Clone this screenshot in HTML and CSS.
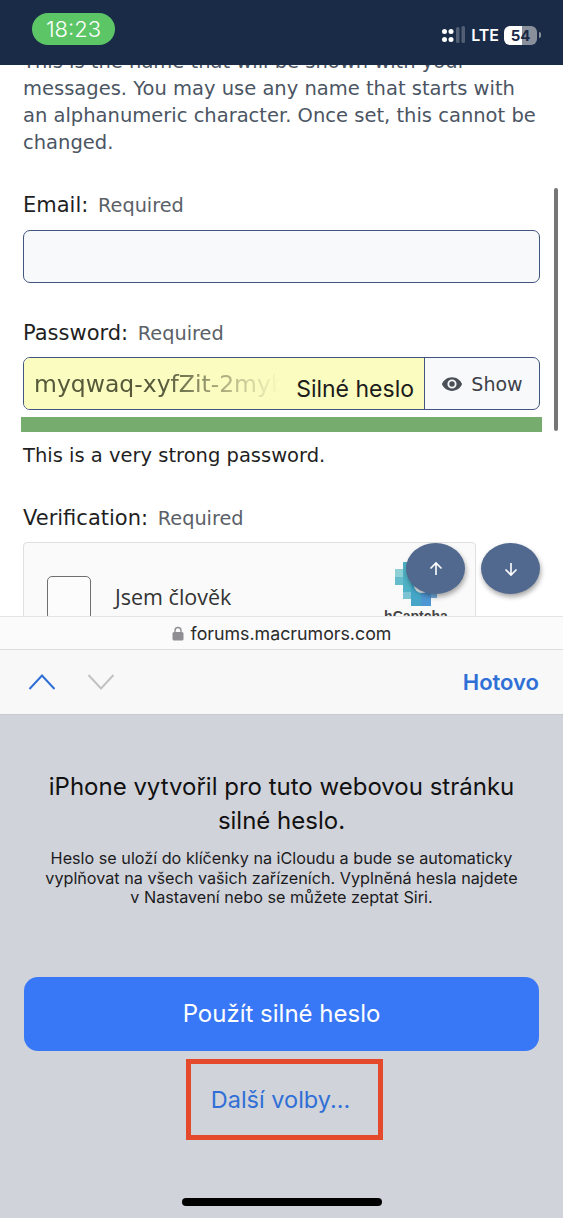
FILE: index.html
```html
<!DOCTYPE html>
<html lang="cs">
<head>
    <meta charset="UTF-8">
    <meta name="viewport" content="width=device-width, initial-scale=1.0">
    <title>Silné heslo</title>
    <link rel="stylesheet" href="styles.css">
</head>
<body>
    <div class="status-bar">
        <div class="time-pill">18:23</div>
        <div class="status-right">
            <svg class="signal" width="24" height="18" viewBox="0 0 24 18">
                <rect x="0" y="3" width="5" height="5" rx="2.5" fill="#fff"/>
                <rect x="0" y="11" width="5" height="5" rx="2.5" fill="#fff"/>
                <rect x="6.500" y="3" width="5" height="5" rx="2.5" fill="#fff"/>
                <rect x="6.500" y="11" width="5" height="5" rx="2.500" fill="#fff"/>
                <rect x="14" y="1" width="3.500" height="16" rx="1.500" fill="#525e74"/>
                <rect x="19.500" y="0" width="3.500" height="17" rx="1.500" fill="#525e74"/>
            </svg>
            <span class="lte">LTE</span>
            <div class="battery"><span class="battery-num">54</span></div>
            <div class="battery-nub"></div>
        </div>
    </div>

    <div class="web">
        <div class="form">
            <p class="hint">This is the name that will be shown with your<br>messages. You may use any name that starts with<br>an alphanumeric character. Once set, this cannot be<br>changed.</p>

            <div class="label email-label">Email: <span class="req">Required</span></div>
            <div class="field email-field"></div>

            <div class="label pass-label">Password: <span class="req">Required</span></div>
            <div class="field pass-field">
                <div class="pass-fill">
                    <span class="pass-value">myqwaq-xyfZit-2mybaj</span>
                    <span class="pass-tag">Silné heslo</span>
                </div>
                <div class="show-btn">
                    <svg width="22" height="22" viewBox="0 0 24 24"><path fill="#4a4f58" d="M12 4.500C7 4.500 2.700 7.600 1 12c1.700 4.400 6 7.500 11 7.500s9.300-3.100 11-7.500c-1.700-4.400-6-7.500-11-7.500zm0 12.500a5 5 0 1 1 0-10 5 5 0 0 1 0 10zm0-8a3 3 0 1 0 0 6 3 3 0 0 0 0-6z"/></svg>
                    <span>Show</span>
                </div>
            </div>
            <div class="meter"></div>
            <div class="meter-text">This is a very strong password.</div>

            <div class="label verify-label">Verification: <span class="req">Required</span></div>
            <div class="captcha">
                <div class="captcha-check"></div>
                <div class="captcha-text">Jsem člověk</div>
                <div class="captcha-logo">
                    <svg width="42" height="44" viewBox="0 0 42 44">
                        <rect x="0" y="7" width="8" height="8" fill="#8fcfd6"/>
                        <rect x="0" y="15" width="8" height="8" fill="#66bccb"/>
                        <rect x="8" y="0" width="8" height="30" fill="#4fb2c6"/>
                        <rect x="8" y="30" width="8" height="7" fill="#7cc3d4"/>
                        <rect x="16" y="0" width="10" height="44" fill="#45a6c8"/>
                        <rect x="26" y="24" width="10" height="20" fill="#4f97d3"/>
                        <rect x="36" y="26" width="6" height="10" fill="#74aee0"/>
                        <circle cx="27" cy="23" r="8" fill="#f4f8fa"/>
                    </svg>
                    <span class="captcha-name">hCaptcha</span>
                </div>
            </div>
        </div>

        <div class="scrollbar"></div>
        <div class="scroll-btn scroll-up">
            <svg width="18" height="18" viewBox="0 0 18 18"><path d="M9 15V3M3.500 8.500 9 3l5.500 5.500" fill="none" stroke="#fff" stroke-width="1.600"/></svg>
        </div>
        <div class="scroll-btn scroll-down">
            <svg width="18" height="18" viewBox="0 0 18 18"><path d="M9 3v12M3.500 9.500 9 15l5.500-5.500" fill="none" stroke="#fff" stroke-width="1.600"/></svg>
        </div>
    </div>

    <div class="url-bar">
        <svg width="12" height="15" viewBox="0 0 12 15"><path d="M3 6.500V4.500a3 3 0 0 1 6 0v2" fill="none" stroke="#8e8e93" stroke-width="1.400"/><rect x="0.500" y="6" width="11" height="8.500" rx="1.500" fill="#8e8e93"/></svg>
        <span>forums.macrumors.com</span>
    </div>

    <div class="toolbar">
        <svg class="chevron" width="28" height="18" viewBox="0 0 28 18"><path d="M1.500 16 14 2.500 26.500 16" fill="none" stroke="#2f6fd6" stroke-width="2"/></svg>
        <svg class="chevron" width="28" height="18" viewBox="0 0 28 18"><path d="M1.500 2 14 15.500 26.500 2" fill="none" stroke="#c2c2c2" stroke-width="2"/></svg>
        <span class="done">Hotovo</span>
    </div>

    <div class="sheet">
        <h2 class="sheet-title">iPhone vytvořil pro tuto webovou stránku<br>silné heslo.</h2>
        <p class="sheet-text">Heslo se uloží do klíčenky na iCloudu a bude se automaticky<br>vyplňovat na všech vašich zařízeních. Vyplněná hesla najdete<br>v Nastavení nebo se můžete zeptat Siri.</p>
        <div class="use-btn">Použít silné heslo</div>
        <div class="more-box">Další volby...</div>
        <div class="home-bar"></div>
    </div>
</body>
</html>
```

FILE: styles.css
```css
html, body {
    margin: 0;
    padding: 0;
}
body {
    width: 563px;
    height: 1218px;
    overflow: hidden;
    display: flex;
    flex-direction: column;
    background: #d1d3da;
    font-family: 'Inter', 'Liberation Sans', sans-serif;
}

/* status bar */
.status-bar {
    height: 65px;
    flex: none;
    background: #1a2b47;
    display: flex;
    justify-content: space-between;
    padding: 13px 22px 0 32px;
    box-sizing: border-box;
}
.time-pill {
    width: 83px;
    height: 32px;
    border-radius: 16px;
    background: #5cc566;
    color: #fff;
    font-size: 22px;
    font-weight: 300;
    line-height: 32px;
    text-align: center;
}
.status-right {
    display: flex;
    align-items: center;
    height: 44px;
}
.signal {
    margin-right: 5px;
}
.lte {
    color: #fff;
    font-size: 16px;
    font-weight: 600;
    margin-right: 5px;
}
.battery {
    width: 33px;
    height: 19px;
    border-radius: 6px;
    background: linear-gradient(90deg, #fff 54%, #8a8f9c 54%);
    color: #1a2b47;
    font-size: 15px;
    font-weight: 700;
    line-height: 19px;
    text-align: center;
}
.battery-nub {
    width: 2px;
    height: 6px;
    margin-left: 2px;
    border-radius: 0 2px 2px 0;
    background: #8a8f9c;
}

/* web page part */
.web {
    position: relative;
    height: 551px;
    flex: none;
    overflow: hidden;
    background: #fff;
}
.form {
    margin-top: -17px;
    padding: 0 23px;
    font-family: 'DejaVu Sans', sans-serif;
    font-size: 19.500px;
}
.hint {
    margin: 0;
    line-height: 27px;
    color: #4b5563;
    white-space: nowrap;
}
.label {
    color: #1f1f1f;
    font-size: 21px;
    line-height: 27px;
}
.req {
    margin-left: 3px;
    font-size: 19.300px;
    color: #5a6068;
}
.email-label {
    margin-top: 36px;
}
.field {
    height: 53px;
    box-sizing: border-box;
    border: 1.500px solid #42557e;
    border-radius: 7px;
    background: #f8f9fb;
}
.email-field {
    margin-top: 11px;
}
.pass-label {
    margin-top: 37px;
}
.pass-field {
    display: flex;
    overflow: hidden;
    margin-top: 10px;
}
.pass-fill {
    flex: 1;
    display: flex;
    align-items: center;
    justify-content: space-between;
    overflow: hidden;
    padding: 0 10px;
    background: #fbfcc0;
}
.pass-value {
    width: 256px;
    flex: none;
    overflow: hidden;
    white-space: nowrap;
    font-size: 23.500px;
    color: #55593a;
    -webkit-mask-image: linear-gradient(90deg, #000 50%, transparent 96%);
    mask-image: linear-gradient(90deg, #000 50%, transparent 96%);
}
.pass-tag {
    flex: none;
    margin-top: 10px;
    font-family: 'Inter', 'Liberation Sans', sans-serif;
    font-size: 23px;
    color: #1c1c1c;
}
.show-btn {
    width: 115px;
    flex: none;
    box-sizing: border-box;
    border-left: 1.500px solid #42557e;
    display: flex;
    align-items: center;
    justify-content: center;
    gap: 8px;
    font-size: 19px;
    color: #3c4048;
}
.meter {
    height: 15px;
    margin: 7px -2px 0 -2px;
    background: #76ad6f;
}
.meter-text {
    margin-top: 10px;
    line-height: 27px;
    color: #1f1f1f;
}
.verify-label {
    margin-top: 36px;
}
.captcha {
    width: 453px;
    height: 110px;
    margin-top: 10px;
    box-sizing: border-box;
    border: 1px solid #e0e0e0;
    border-radius: 4px;
    background: #fafafa;
    display: flex;
    padding: 33px 0 0 23px;
    position: relative;
}
.captcha-check {
    width: 44px;
    height: 44px;
    flex: none;
    box-sizing: border-box;
    border: 1px solid #6f6f6f;
    border-radius: 5px;
    background: #fcfcfc;
}
.captcha-text {
    margin-left: 24px;
    margin-top: -1px;
    font-family: 'Open Sans', sans-serif;
    font-size: 21.500px;
    line-height: 44px;
    color: #333;
}
.captcha-logo {
    margin-left: auto;
    margin-right: 38px;
    margin-top: -14px;
    width: 42px;
    display: flex;
    flex-direction: column;
    align-items: center;
}
.captcha-name {
    margin-top: 2px;
    font-family: 'Liberation Sans', sans-serif;
    font-size: 14px;
    font-weight: 700;
    color: #444;
}
.scrollbar {
    position: absolute;
    left: 554px;
    top: 123px;
    width: 4px;
    height: 243px;
    border-radius: 2px;
    background: #767676;
}
.scroll-btn {
    position: absolute;
    top: 478px;
    width: 59px;
    height: 51px;
    border-radius: 50%;
    background: #51688f;
    box-shadow: 1px 3px 5px rgba(0, 0, 0, 0.35);
    display: flex;
    align-items: center;
    justify-content: center;
}
.scroll-up {
    left: 406px;
}
.scroll-down {
    left: 481px;
}

/* safari bars */
.url-bar {
    height: 34px;
    flex: none;
    box-sizing: border-box;
    background: #fbfbfb;
    border-top: 1px solid #e4e4e4;
    border-bottom: 1px solid #dedede;
    display: flex;
    align-items: center;
    justify-content: center;
    gap: 7px;
    font-size: 17.800px;
    color: #2a2a2a;
}
.toolbar {
    height: 65px;
    flex: none;
    box-sizing: border-box;
    background: #f8f8f8;
    display: flex;
    align-items: center;
    gap: 31px;
    padding: 0 24px 0 28px;
    border-bottom: 1px solid #c8c9cf;
}
.done {
    margin-left: auto;
    font-size: 22px;
    font-weight: 600;
    color: #2f6fd6;
}

/* password sheet */
.sheet {
    flex: 1;
    display: flex;
    flex-direction: column;
    align-items: center;
    background: #d1d3da;
    color: #111;
}
.sheet-title {
    margin: 55px 0 0;
    font-size: 24px;
    font-weight: 400;
    line-height: 34px;
    text-align: center;
}
.sheet-text {
    margin: 11px 0 0;
    font-size: 16.200px;
    line-height: 19.500px;
    text-align: center;
    color: #1c1c1e;
}
.use-btn {
    width: 515px;
    height: 74px;
    margin-top: 69px;
    border-radius: 14px;
    background: #3878f7;
    color: #fff;
    font-size: 24px;
    line-height: 74px;
    text-align: center;
}
.more-box {
    width: 197px;
    height: 81px;
    margin-top: 8px;
    margin-left: 5px;
    padding-right: 7px;
    box-sizing: border-box;
    border: 5px solid #e5492c;
    color: #2f6fd6;
    font-size: 23.500px;
    line-height: 71px;
    text-align: center;
}
.home-bar {
    width: 200px;
    height: 8px;
    margin-top: 58px;
    border-radius: 4px;
    background: #000;
}
```
